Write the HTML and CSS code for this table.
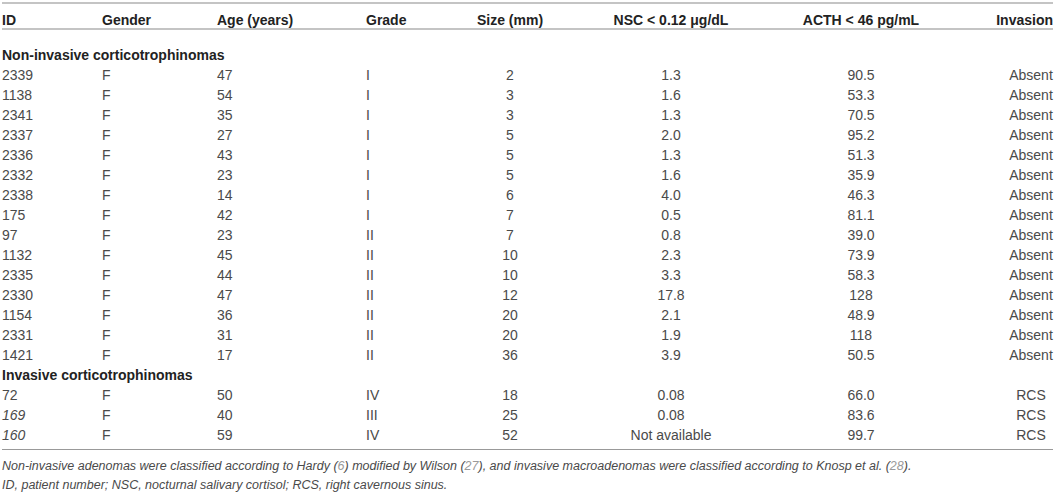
FILE: index.html
```html
<!DOCTYPE html>
<html>
<head>
<meta charset="utf-8">
<link rel="stylesheet" href="styles.css">
</head>
<body>
<div class="wrap">
<table class="data">
<colgroup>
<col class="c-id"><col class="c-gender"><col class="c-age"><col class="c-grade"><col class="c-size"><col class="c-nsc"><col class="c-acth"><col class="c-inv">
</colgroup>
<thead>
<tr>
<th>ID</th><th>Gender</th><th>Age (years)</th><th>Grade</th><th class="ctr">Size (mm)</th><th class="ctr">NSC &lt; 0.12 μg/dL</th><th class="ctr">ACTH &lt; 46 pg/mL</th><th class="inv-h">Invasion</th>
</tr>
</thead>
<tbody>
<tr class="section first"><td colspan="8">Non-invasive corticotrophinomas</td></tr>
<tr><td>2339</td><td>F</td><td>47</td><td>I</td><td class="ctr">2</td><td class="ctr">1.3</td><td class="ctr">90.5</td><td class="inv">Absent</td></tr>
<tr><td>1138</td><td>F</td><td>54</td><td>I</td><td class="ctr">3</td><td class="ctr">1.6</td><td class="ctr">53.3</td><td class="inv">Absent</td></tr>
<tr><td>2341</td><td>F</td><td>35</td><td>I</td><td class="ctr">3</td><td class="ctr">1.3</td><td class="ctr">70.5</td><td class="inv">Absent</td></tr>
<tr><td>2337</td><td>F</td><td>27</td><td>I</td><td class="ctr">5</td><td class="ctr">2.0</td><td class="ctr">95.2</td><td class="inv">Absent</td></tr>
<tr><td>2336</td><td>F</td><td>43</td><td>I</td><td class="ctr">5</td><td class="ctr">1.3</td><td class="ctr">51.3</td><td class="inv">Absent</td></tr>
<tr><td>2332</td><td>F</td><td>23</td><td>I</td><td class="ctr">5</td><td class="ctr">1.6</td><td class="ctr">35.9</td><td class="inv">Absent</td></tr>
<tr><td>2338</td><td>F</td><td>14</td><td>I</td><td class="ctr">6</td><td class="ctr">4.0</td><td class="ctr">46.3</td><td class="inv">Absent</td></tr>
<tr><td>175</td><td>F</td><td>42</td><td>I</td><td class="ctr">7</td><td class="ctr">0.5</td><td class="ctr">81.1</td><td class="inv">Absent</td></tr>
<tr><td>97</td><td>F</td><td>23</td><td>II</td><td class="ctr">7</td><td class="ctr">0.8</td><td class="ctr">39.0</td><td class="inv">Absent</td></tr>
<tr><td>1132</td><td>F</td><td>45</td><td>II</td><td class="ctr">10</td><td class="ctr">2.3</td><td class="ctr">73.9</td><td class="inv">Absent</td></tr>
<tr><td>2335</td><td>F</td><td>44</td><td>II</td><td class="ctr">10</td><td class="ctr">3.3</td><td class="ctr">58.3</td><td class="inv">Absent</td></tr>
<tr><td>2330</td><td>F</td><td>47</td><td>II</td><td class="ctr">12</td><td class="ctr">17.8</td><td class="ctr">128</td><td class="inv">Absent</td></tr>
<tr><td>1154</td><td>F</td><td>36</td><td>II</td><td class="ctr">20</td><td class="ctr">2.1</td><td class="ctr">48.9</td><td class="inv">Absent</td></tr>
<tr><td>2331</td><td>F</td><td>31</td><td>II</td><td class="ctr">20</td><td class="ctr">1.9</td><td class="ctr">118</td><td class="inv">Absent</td></tr>
<tr><td>1421</td><td>F</td><td>17</td><td>II</td><td class="ctr">36</td><td class="ctr">3.9</td><td class="ctr">50.5</td><td class="inv">Absent</td></tr>
<tr class="section"><td colspan="8">Invasive corticotrophinomas</td></tr>
<tr><td>72</td><td>F</td><td>50</td><td>IV</td><td class="ctr">18</td><td class="ctr">0.08</td><td class="ctr">66.0</td><td class="inv">RCS</td></tr>
<tr><td class="it">169</td><td>F</td><td>40</td><td>III</td><td class="ctr">25</td><td class="ctr">0.08</td><td class="ctr">83.6</td><td class="inv">RCS</td></tr>
<tr class="last"><td class="it">160</td><td>F</td><td>59</td><td>IV</td><td class="ctr">52</td><td class="ctr">Not available</td><td class="ctr">99.7</td><td class="inv">RCS</td></tr>
</tbody>
</table>
<div class="notes">
<p>Non-invasive adenomas were classified according to Hardy (<span class="ref">6</span>) modified by Wilson (<span class="ref">27</span>), and invasive macroadenomas were classified according to Knosp et al. (<span class="ref">28</span>).</p>
<p>ID, patient number; NSC, nocturnal salivary cortisol; RCS, right cavernous sinus.</p>
</div>
</div>
</body>
</html>
```

FILE: styles.css
```css
html, body {
  margin: 0;
  padding: 0;
  background: #fff;
}
body {
  font-family: "Liberation Sans", Arial, sans-serif;
  color: #4a4a4a;
}
.wrap {
  padding-left: 2px;
  width: 1051px;
}
.data {
  border-collapse: collapse;
  table-layout: fixed;
  width: 1051px;
  margin-top: 2px;
  font-size: 14px;
}
.c-id { width: 100px; }
.c-gender { width: 115px; }
.c-age { width: 149px; }
.c-grade { width: 94px; }
.c-size { width: 100px; }
.c-nsc { width: 222px; }
.c-acth { width: 158px; }
.c-inv { width: 113px; }

.data th {
  font-weight: bold;
  color: #222;
  text-align: left;
  vertical-align: bottom;
  padding: 8px 0 0 0;
  line-height: 16px;
  height: 16px;
  white-space: nowrap;
  border-top: 2px solid #c4c4c4;
  border-bottom: 2px solid #c4c4c4;
}
.data td {
  padding: 0;
  height: 20px;
  line-height: 20px;
  white-space: nowrap;
  vertical-align: middle;
}
.data .ctr { text-align: center; }
.data .inv-h { text-align: right; }
.data .inv { text-align: center; padding-left: 69px; }
.data .it { font-style: italic; }
.data .section td {
  font-weight: bold;
  color: #222;
}
.data .section.first td {
  padding-top: 15px;
}
.data .last td {
  padding-bottom: 4px;
  border-bottom: 1px solid #999;
}
.notes {
  margin-top: 7px;
  font-size: 12.5px;
  font-style: italic;
  color: #4a4a4a;
}
.notes p {
  margin: 0;
  line-height: 19px;
}
.ref {
  color: #9a9a9a;
}
```
